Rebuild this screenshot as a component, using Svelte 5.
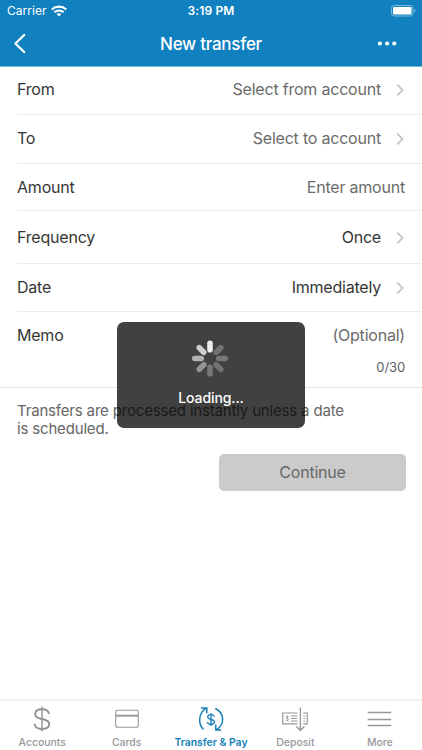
<script>
  const rows = [
    { label: 'From', value: 'Select from account', height: 48, top: 11, arrow: true, muted: true },
    { label: 'To', value: 'Select to account', height: 49, top: 12, arrow: true, muted: true },
    { label: 'Amount', value: 'Enter amount', height: 47, top: 12, arrow: false, muted: true },
    { label: 'Frequency', value: 'Once', height: 53, top: 15, arrow: true, muted: false },
    { label: 'Date', value: 'Immediately', height: 48, top: 12, arrow: true, muted: false }
  ];
  const spokes = ['#eeeeee', '#737373', '#777777', '#747474', '#777777', '#949494', '#b2b2b2', '#cfcfcf'];
</script>

<div class="screen">
  <header>
    <div class="status">
      <div class="carrier">
        <span>Carrier</span>
        <svg width="16" height="12" viewBox="0 0 16 12" fill="none" stroke="#fff" stroke-width="2.1">
          <path d="M.8 4.400C4.800.7 11.200.7 15.200 4.400" />
          <path d="M3.400 7.300C6 4.900 10 4.900 12.600 7.300" />
          <path d="M8 11.600 5.500 9.100C6.900 7.800 9.100 7.800 10.500 9.100Z" fill="#fff" stroke="none" />
        </svg>
      </div>
      <span class="time">3:19 PM</span>
      <svg class="battery" width="25" height="12" viewBox="0 0 25 12">
        <rect x=".5" y=".5" width="21.500" height="10.500" rx="2.800" fill="none" stroke="#7dbbe0" />
        <rect x="2" y="2" width="18.500" height="7.500" rx="1.200" fill="#fff" />
        <path d="M23.300 4v3.600q1.200-.5 1.200-1.800T23.300 4Z" fill="#8cc4e5" />
      </svg>
    </div>
    <div class="nav">
      <svg width="14" height="22" viewBox="0 0 14 22" fill="none" stroke="#fff" stroke-width="2.300" stroke-linecap="round" stroke-linejoin="round">
        <path d="M11.200 2 2.400 10.500 11.200 19" />
      </svg>
      <h1>New transfer</h1>
      <svg class="dots" width="20" height="6" viewBox="0 0 20 6" fill="#fff">
        <circle cx="2.900" cy="2.500" r="2.100" /><circle cx="10.100" cy="2.500" r="2.100" /><circle cx="17.300" cy="2.500" r="2.100" />
      </svg>
    </div>
  </header>

  <main>
    {#each rows as row}
      <div class="row" style="height: {row.height}px; padding-top: {row.top}px">
        <span>{row.label}</span>
        <span class="value" class:muted={row.muted}>{row.value}</span>
        {#if row.arrow}
          <svg width="9" height="14" viewBox="0 0 9 14" fill="none" stroke="#c4c4c4" stroke-width="1.800">
            <path d="M1.300 1.700 6.600 7 1.300 12.300" />
          </svg>
        {/if}
      </div>
    {/each}
    <div class="memo">
      <div class="line"><span>Memo</span><span class="muted">(Optional)</span></div>
      <div class="count">0/30</div>
    </div>
    <p>Transfers are processed instantly unless a date<br />is scheduled.</p>
    <button>Continue</button>
  </main>

  <footer>
    <div class="tab">
      <svg width="28" height="28" viewBox="0 0 28 28" fill="none" stroke="#929292" stroke-width="1.900">
        <path d="M14 1.500v25" stroke-width="1.400" />
        <path d="M21 9C20.700 6 18 4.200 14 4.200S7.200 6 7.200 9c0 3.200 2.600 4.200 6.800 5 4.500.9 7.200 2 7.200 5.100S18.300 24 14 24 6.800 22 6.600 18.800" />
      </svg>
      <span>Accounts</span>
    </div>
    <div class="tab">
      <svg width="28" height="28" viewBox="0 0 28 28" fill="none" stroke="#999">
        <rect x="2.700" y="5.300" width="22.600" height="17" rx="2" stroke-width="1.100" />
        <path d="M3 10.700h22" stroke-width="2" />
      </svg>
      <span>Cards</span>
    </div>
    <div class="tab active">
      <svg width="28" height="28" viewBox="0 0 28 28" fill="none" stroke="#167fb9" stroke-width="1.500">
        <path d="M6.500 24.500C1 19 1 8.500 9.200 3.200M4 3h5.800v5.300M18.300 3.500C27.500 8 28.200 19 19.500 24.800M18.800 19.500v5.500h5.300" />
        <path d="M14 8v13M17.300 11.700C17 10.300 15.800 9.700 14 9.700s-3.300.9-3.300 2.300c0 1.700 1.500 2 3.300 2.400 2 .4 3.500 1 3.500 2.700S16 19.500 14 19.500s-3.400-.9-3.600-2.500" stroke-width="1.300" />
      </svg>
      <span>Transfer &amp; Pay</span>
    </div>
    <div class="tab">
      <svg width="28" height="28" viewBox="0 0 28 28" fill="none" stroke="#999" stroke-width="1.200">
        <path d="M16.500 8H1.700v10.800h14.800M22.200 8h4v10.800h-4M10 11h6.500M10 13.500h6.500M10 16h6.500M22.500 11h1.500M22.500 13.500h1.500M22.500 16h1.500" />
        <path d="M19.400 2.500v22.800M15.400 21.500l4 4 4-4" stroke-width="1.400" />
        <path d="M7.800 11.700C6.700 10.900 5 11.300 5 12.300c0 1.400 2.700.8 2.700 2.200 0 1.200-1.800 1.400-2.900.6M6.300 10.500v5.700" stroke-width=".8" />
      </svg>
      <span>Deposit</span>
    </div>
    <div class="tab">
      <svg width="28" height="28" viewBox="0 0 28 28" stroke="#999" stroke-width="1.300">
        <path d="M1.700 7.500h23.500M1.700 14.500h23.500M1.700 20.500h23.500" />
      </svg>
      <span>More</span>
    </div>
  </footer>

  <div class="loading">
    <svg width="38" height="38" viewBox="-18 -18.500 38 38">
      {#each spokes as color, i}
        <rect x="-2.800" y="-18" width="5.600" height="12" rx="2.800" fill={color} transform="rotate({i * 45})" />
      {/each}
    </svg>
    <span>Loading...</span>
  </div>
</div>

<style>
  :global(body) { margin: 0; background: #fff; }
  * { box-sizing: border-box; }
  .screen {
    position: relative; width: 422px; height: 750px; display: flex; flex-direction: column;
    font-family: Inter, Roboto, sans-serif; font-size: 16px; line-height: 22px; color: #363636; background: #fff; overflow: hidden;
  }
  svg { display: block; flex: none; }
  header { height: 67px; background: #1080bf; border-bottom: 1px solid #79b5db; color: #fff; flex: none; }
  .status { height: 22px; display: grid; grid-template-columns: 1fr auto 1fr; align-items: center; padding: 0 6px; font-size: 12px; }
  .carrier { display: flex; align-items: center; gap: 4px; padding-left: 1px; letter-spacing: .05px; }
  .time { font-weight: 600; letter-spacing: .15px; }
  .battery { justify-self: end; }
  .nav { height: 44px; display: grid; grid-template-columns: 1fr auto 1fr; align-items: center; padding: 0 13px; }
  .dots { justify-self: end; margin-right: 12px; }
  h1 { margin: 0; font-size: 17px; font-weight: 500; line-height: 22px; letter-spacing: -.27px; }
  main { flex: 1; }
  .row { display: flex; align-items: flex-start; margin-left: 17px; padding-right: 17px; border-bottom: 1px solid #ebebeb; letter-spacing: -.21px; }
  .value { margin-left: auto; }
  .muted { color: #6b6b6b; }
  .row svg { margin: 5px 0 0 15px; }
  .memo { height: 76px; padding: 12px 17px 0; border-bottom: 1px solid #e5e5e5; letter-spacing: -.21px; }
  .line { display: flex; justify-content: space-between; }
  .count { text-align: right; font-size: 13px; line-height: 18px; margin-top: 12px; color: #606060; letter-spacing: -.1px; }
  p { margin: 14px 17px 0; font-size: 15px; line-height: 18px; color: #666; white-space: nowrap; letter-spacing: -.17px; }
  button { display: block; width: 187px; height: 37px; margin: 16px 16px 0 auto; padding: 0 0 1px; border: 0; border-radius: 5px; background: #cbcbcb; color: #666; font: 16px Inter, sans-serif; letter-spacing: -.2px; }
  footer { flex: none; height: 51px; border-top: 2px solid #f2f2f2; display: grid; grid-template-columns: repeat(5, 1fr); padding-top: 4px; }
  .tab { display: flex; flex-direction: column; align-items: center; color: #999; font-size: 10.5px; font-weight: 500; line-height: 14px; letter-spacing: -.05px; gap: 3px; white-space: nowrap; }
  .active { color: #167fb9; font-weight: 600; }
  .loading {
    position: absolute; left: 117px; top: 322px; width: 188px; height: 106px; border-radius: 7px;
    background: rgba(0, 0, 0, .745); color: #fff; display: flex; flex-direction: column; align-items: center;
    padding-top: 18px; gap: 9px; font-size: 14px; font-weight: 500; letter-spacing: -.1px;
  }
</style>
